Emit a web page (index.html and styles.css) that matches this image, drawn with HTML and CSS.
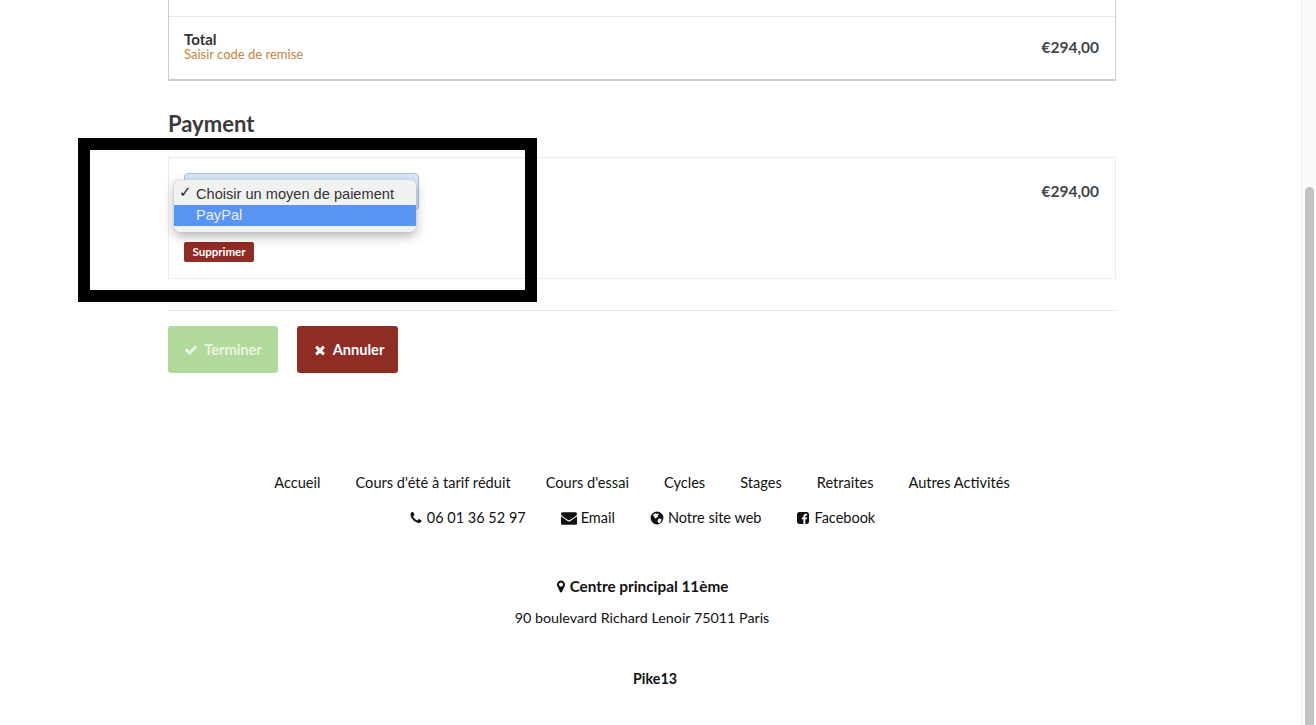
FILE: index.html
```html
<!DOCTYPE html>
<html lang="fr">
<head>
  <meta charset="UTF-8" />
  <title>Paiement</title>
  <link rel="stylesheet" href="styles.css">
</head>
<body>
  <div class="page">
    <div class="content">
      <div class="order-card">
        <div class="order-spacer"></div>
        <div class="order-total">
          <div>
            <div class="total-label">Total</div>
            <a class="discount-link">Saisir code de remise</a>
          </div>
          <div class="price">€294,00</div>
        </div>
      </div>

      <h2 class="section-title">Payment</h2>

      <div class="payment-card">
        <div class="payment-left">
          <div class="select-box"></div>
          <button class="btn-remove">Supprimer</button>
        </div>
        <div class="price price-top">€294,00</div>

        <div class="select-menu">
          <div class="select-option"><span class="select-tick">✓</span>Choisir un moyen de paiement</div>
          <div class="select-option selected">PayPal</div>
        </div>
      </div>

      <hr class="divider">

      <div class="actions">
        <button class="btn btn-done">
          <svg class="icon" viewBox="0 0 1792 1792"><path d="M1671 566q0 40-28 68l-724 724-136 136q-28 28-68 28t-68-28l-136-136-362-362q-28-28-28-68t28-68l136-136q28-28 68-28t68 28l294 295 656-657q28-28 68-28t68 28l136 136q28 28 28 68z"/></svg>
          Terminer
        </button>
        <button class="btn btn-cancel">
          <svg class="icon" viewBox="0 0 1792 1792"><path d="M1490 1322q0 40-28 68l-136 136q-28 28-68 28t-68-28l-294-294-294 294q-28 28-68 28t-68-28l-136-136q-28-28-28-68t28-68l294-294-294-294q-28-28-28-68t28-68l136-136q28-28 68-28t68 28l294 294 294-294q28-28 68-28t68 28l136 136q28 28 28 68t-28 68l-294 294 294 294q28 28 28 68z"/></svg>
          Annuler
        </button>
      </div>

      <footer class="footer">
        <nav class="footer-nav">
          <a>Accueil</a>
          <a>Cours d'été à tarif réduit</a>
          <a>Cours d'essai</a>
          <a>Cycles</a>
          <a>Stages</a>
          <a>Retraites</a>
          <a>Autres Activités</a>
        </nav>
        <div class="footer-contact">
          <a><svg class="icon" viewBox="0 0 1792 1792"><path d="M1600 1240q0 27-10 70.5t-21 68.5q-21 50-122 106-94 51-186 51-27 0-53-3.5t-57.5-12.5-47-14.5-55.5-20.5-49-18q-98-35-175-83-127-79-264-216t-216-264q-48-77-83-175-3-9-18-49t-20.5-55.5-14.5-47-12.5-57.5-3.5-53q0-92 51-186 56-101 106-122 25-11 68.5-21t70.5-10q14 0 21 3 18 6 53 76 11 19 30 54t35 63.5 31 53.5q3 4 17.5 25t21.5 35.5 7 28.5q0 20-28.5 50t-62 55-62 53-28.5 46q0 9 5 22.5t8.5 20.5 14 24 11.5 19q76 137 174 235t235 174q2 1 19 11.5t24 14 20.5 8.5 22.5 5q18 0 46-28.5t53-62 55-62 50-28.5q14 0 28.5 7t35.5 21.5 25 17.5q25 15 53.5 31t63.5 35 54 30q70 35 76 53 3 7 3 21z"/></svg>06 01 36 52 97</a>
          <a><svg class="icon icon-wide" viewBox="0 0 1792 1792"><path d="M1792 710v794q0 66-47 113t-113 47h-1472q-66 0-113-47t-47-113v-794q44 49 101 87 362 246 497 345 57 42 92.5 65.5t94.5 48 110 24.5h2q51 0 110-24.5t94.5-48 92.5-65.5q170-123 498-345 57-39 100-87zm0-294q0 79-49 151t-122 123q-376 261-468 325-10 7-42.5 30.5t-54 38-52 32.5-57.5 27-50 9h-2q-23 0-50-9t-57.5-27-52-32.5-54-38-42.5-30.5q-91-64-262-182.5t-205-142.5q-62-42-117-115.5t-55-136.5q0-78 41.5-130t118.5-52h1472q65 0 112.5 47t47.5 113z"/></svg>Email</a>
          <a><svg class="icon" viewBox="0 0 24 24"><path d="M12 1a11 11 0 1 0 0 22 11 11 0 0 0 0-22zM6 6l3-2 3 1 2-1 1 2-2 2 1 2-3 1-1 2-2-1-1-3-2-1zm8 8l3-1 3 1-1 4-3 3-2-1-1-3z" fill-rule="evenodd"/></svg>Notre site web</a>
          <a><svg class="icon" viewBox="0 0 1792 1792"><path d="M1376 128q119 0 203.5 84.5t84.5 203.5v960q0 119-84.5 203.5t-203.5 84.5h-188v-595h199l30-232h-229v-148q0-56 23.5-84t91.5-28l122-1v-207q-63-9-178-9-136 0-217.5 80t-81.5 226v171h-200v232h200v595h-532q-119 0-203.5-84.5t-84.5-203.5v-960q0-119 84.5-203.5t203.5-84.5h960z"/></svg>Facebook</a>
        </div>
        <div class="footer-place">
          <svg class="icon icon-pin" viewBox="256 128 1280 1536"><path d="M1152 640q0-106-75-181t-181-75-181 75-75 181 75 181 181 75 181-75 75-181zm256 0q0 109-33 179l-364 774q-16 33-47.5 52t-67.5 19-67.5-19-47.5-52l-365-774q-33-70-33-179 0-212 150-362t362-150 362 150 150 362z"/></svg>
          Centre principal 11ème
        </div>
        <div class="footer-address">90 boulevard Richard Lenoir 75011 Paris</div>
        <div class="footer-brand">Pike13</div>
      </footer>
    </div>
  </div>

  <div class="scrollbar"><div class="scrollbar-thumb"></div></div>

  <div class="redaction"></div>
</body>
</html>
```

FILE: styles.css
```css
* { box-sizing: border-box; }
html, body {
  height: 100%;
}
body {
  margin: 0;
  height: 725px;
  overflow: hidden;
  display: flex;
  position: relative;
  font-family: Lato, sans-serif;
  color: #111;
  background: #fff;
}
.page {
  flex: 1;
  padding-left: 168px;
}
.content {
  width: 948px;
}
.order-card {
  border: 1px solid #ccc;
  border-top: none;
  border-bottom-width: 2px;
  height: 81px;
}
.order-spacer {
  height: 17px;
  border-bottom: 1px solid #e9e9e9;
}
.order-total {
  display: flex;
  justify-content: space-between;
  align-items: center;
  padding: 14px 16px 0 15px;
}
.total-label {
  font-size: 15px;
  font-weight: 700;
  line-height: 16px;
  color: #333;
}
.discount-link {
  display: block;
  font-size: 13px;
  line-height: 15px;
  color: #c8833c;
}
.price {
  font-size: 15.5px;
  font-weight: 700;
  color: #444;
}
.price-top {
  margin-top: 9px;
}
.section-title {
  margin: 29px 0 19px;
  font-size: 22px;
  line-height: 28px;
  font-weight: 700;
  color: #3a3a3a;
}
.payment-card {
  position: relative;
  height: 122px;
  border: 1px solid #ececec;
  display: flex;
  justify-content: space-between;
  padding: 15px 16px 0 15px;
}
.payment-left {
  display: flex;
  flex-direction: column;
  align-items: flex-start;
}
.select-box {
  width: 235px;
  height: 37px;
  border: 1px solid #a8bedf;
  border-radius: 4px;
  background: #dbe8fb;
}
.btn-remove {
  margin-top: 32px;
  width: 70px;
  height: 20px;
  padding: 0 0 1px;
  border: none;
  border-radius: 2px;
  background: #8f2c24;
  color: #fff;
  font-family: inherit;
  font-size: 11.5px;
  font-weight: 700;
}
.select-menu {
  position: absolute;
  left: 5px;
  top: 22px;
  width: 242px;
  height: 52px;
  padding-bottom: 4px;
  border-radius: 5px;
  background: #f1f1f1;
  box-shadow: 0 0 1px #999, 0 4px 12px rgba(0, 0, 0, 0.3);
  font-family: "Liberation Sans", sans-serif;
  font-size: 14.6px;
  color: #333;
  overflow: hidden;
}
.select-option {
  position: relative;
  height: 25px;
  line-height: 28px;
  padding-left: 22px;
}
.select-option.selected {
  height: 21px;
  line-height: 20px;
  background: #5a94f2;
  color: #e9f1ff;
}
.select-tick {
  position: absolute;
  left: 5px;
  top: -2px;
  font-family: "DejaVu Sans", sans-serif;
  font-size: 15px;
  font-weight: 700;
  color: #222;
}
.divider {
  margin: 31px 0 15px;
  border: none;
  border-top: 1px solid #e6e6e6;
}
.actions {
  display: flex;
  gap: 19px;
}
.btn {
  height: 47px;
  padding-bottom: 1px;
  border: none;
  border-radius: 3px;
  color: #fff;
  font-family: inherit;
  font-size: 14.6px;
  font-weight: 700;
  display: flex;
  align-items: center;
  justify-content: center;
  gap: 6px;
}
.btn .icon {
  fill: currentColor;
}
.btn-done {
  width: 110px;
  background: #b0d99b;
  color: #e8f5e0;
}
.btn-cancel {
  width: 101px;
  background: #8f2c24;
  padding-right: 4px;
}
.icon {
  width: 14px;
  height: 14px;
  flex: none;
  fill: #111;
}
.icon-wide {
  width: 16px;
  height: 16px;
}
.icon-pin {
  width: 10px;
  height: 15px;
}
.footer {
  margin-top: 100px;
  font-size: 14.6px;
  text-align: center;
}
.footer-nav, .footer-contact {
  display: flex;
  justify-content: center;
  gap: 35px;
  line-height: 20px;
}
.footer-contact {
  margin-top: 15px;
  font-size: 14.5px;
}
.footer-contact a {
  display: flex;
  align-items: center;
  gap: 4px;
}
.footer-place {
  margin-top: 47px;
  display: flex;
  justify-content: center;
  align-items: center;
  gap: 4px;
  font-size: 15.3px;
  font-weight: 700;
  line-height: 22px;
}
.footer-address {
  margin-top: 11px;
  font-size: 14.3px;
  line-height: 20px;
}
.footer-brand {
  margin-top: 41px;
  padding-left: 26px;
  font-size: 14.3px;
  font-weight: 700;
  line-height: 20px;
}
.scrollbar {
  flex: none;
  width: 15px;
  border-left: 1px solid #ececec;
  background: #fafafa;
  padding: 187px 2px 0 3px;
}
.scrollbar-thumb {
  height: 100%;
  border-radius: 5px 5px 0 0;
  background: #c2c2c2;
}
/* black frame drawn over the shot */
.redaction {
  position: absolute;
  left: 78px;
  top: 138px;
  width: 459px;
  height: 164px;
  border: 12px solid #000;
}
```
